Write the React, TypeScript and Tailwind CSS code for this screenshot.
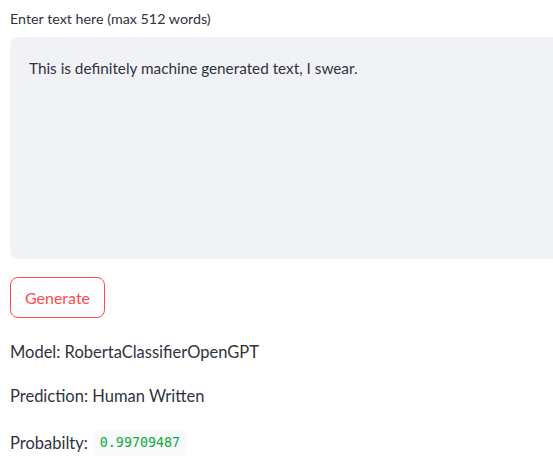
export default function App() {
  return (
    <div
      className="min-h-[472px] w-[553px] overflow-hidden bg-white pl-[10px] text-[#31333f]"
      style={{ fontFamily: 'Lato, "Open Sans", sans-serif' }}
    >
      <label className="block pt-[10px] text-[14.3px] leading-[18px]">
        Enter text here (max 512 words)
      </label>
      <div className="mt-[9px] h-[222px] w-[560px] rounded-[8px] bg-[#f0f2f6] px-[19px] pt-[19px] text-[15.3px] leading-[24px]">
        This is definitely machine generated text, I swear.
      </div>
      <button className="mt-[18px] h-[41px] w-[95px] rounded-[8px] border border-[#ff4b4b] bg-white text-[16px] text-[#ff4b4b]">
        Generate
      </button>
      <p className="mt-[22px] text-[16.5px] leading-[24px]">Model: RobertaClassifierOpenGPT</p>
      <p className="mt-[20px] text-[16.5px] leading-[24px]">Prediction: Human Written</p>
      <p className="mt-[22px] flex items-center gap-[6px] text-[16.5px] leading-[24px]">
        Probabilty:
        <code
          className="rounded-[4px] bg-[#f8f9fb] px-[6px] py-[1px] text-[13.3px] text-[#09ab3b]"
          style={{ fontFamily: '"DejaVu Sans Mono", monospace' }}
        >
          0.99709487
        </code>
      </p>
    </div>
  )
}
